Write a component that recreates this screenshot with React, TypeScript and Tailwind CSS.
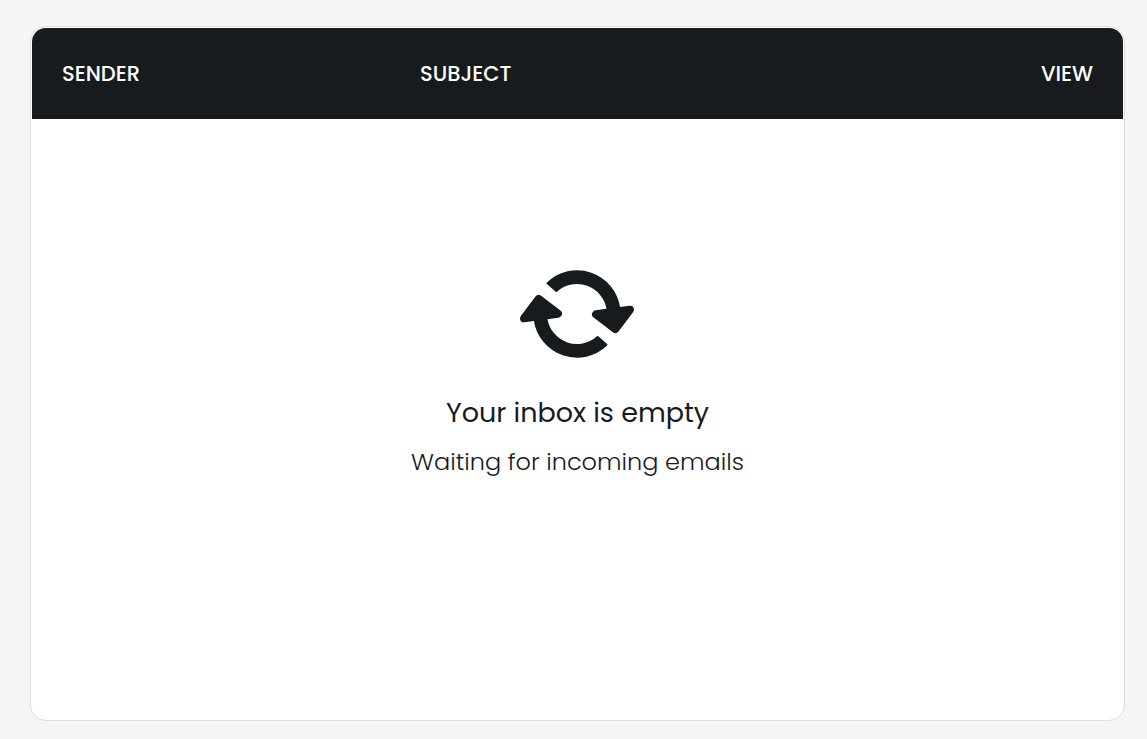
function RefreshIcon() {
  return (
    <svg
      viewBox="33 30 342 264"
      className="h-[88px] w-[114px] overflow-visible fill-[#171b1d] stroke-[#171b1d]"
      strokeLinejoin="round"
      aria-hidden="true"
    >
      <g id="arrow">
        <path
          strokeWidth="6"
          d="M112.6 69.5 A128 128 0 0 1 327.7 144 L293 149 A93 93 0 0 0 139 92.7 Z"
        />
        <path strokeWidth="24" d="M258 163 L360 149 L316 207 Z" />
      </g>
      <use href="#arrow" transform="rotate(180 201 162)" />
    </svg>
  );
}

export default function App() {
  return (
    <main className="min-h-screen bg-[#f5f5f5] pt-[26px] pr-[22px] pb-[18px] pl-[30px] font-['Poppins','Inter',sans-serif] text-[#171b1d]">
      <section className="rounded-2xl border border-[#dddddd] bg-white p-px">
        <div className="overflow-hidden rounded-[14px]">
          <table className="w-full table-fixed border-collapse text-left">
            <thead className="bg-[#171b1d] text-[21px] leading-7 text-white uppercase">
              <tr className="h-[91px]">
                <th scope="col" className="w-[33%] pl-[30px] font-medium">
                  Sender
                </th>
                <th scope="col" className="px-7 font-medium">
                  Subject
                </th>
                <th scope="col" className="pr-[30px] text-right font-medium">
                  View
                </th>
              </tr>
            </thead>
            <tbody>
              <tr>
                <td colSpan={3} className="pt-[151px] pb-[237px]">
                  <div className="flex flex-col items-center text-center">
                    <RefreshIcon />
                    <p className="mt-[35px] text-[27px] leading-10">Your inbox is empty</p>
                    <p className="mt-[9px] text-2xl leading-10 font-light">
                      Waiting for incoming emails
                    </p>
                  </div>
                </td>
              </tr>
            </tbody>
          </table>
        </div>
      </section>
    </main>
  );
}
